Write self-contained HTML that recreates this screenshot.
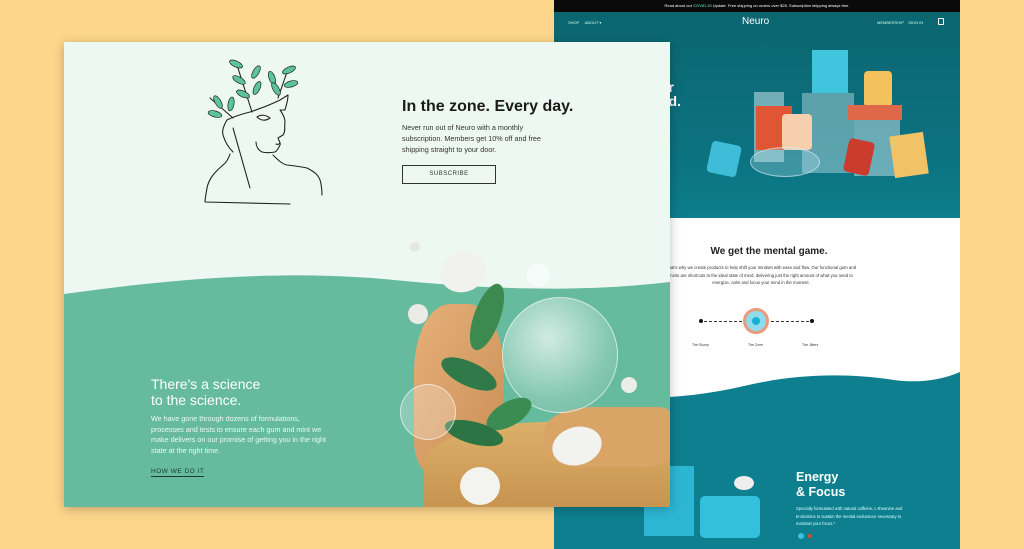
<!DOCTYPE html>
<html><head><meta charset="utf-8"><style>
*{margin:0;padding:0;box-sizing:border-box}
body{width:1024px;height:549px;overflow:hidden;background:#fdd68c;font-family:"Liberation Sans",sans-serif;position:relative}
.abs{position:absolute}
</style></head><body>
<!-- right page -->
<div class="abs" style="left:554px;top:0;width:406px;height:549px;background:#fff;overflow:hidden">
  <div class="abs" style="left:0;top:0;width:406px;height:12px;background:#0a0a0a;color:#fff;font-size:4px;text-align:center;line-height:12px">Read about our <span style="color:#6fd">COVID-19</span> Update. Free shipping on orders over $25. Subscription shipping always free.</div>
  <div class="abs" style="left:0;top:12px;width:406px;height:206px;background:linear-gradient(#0b6670,#0c7280 70%,#0d7e8c)"></div>
  <div class="abs" style="left:14px;top:20px;color:#cfe;font-size:4px">SHOP &nbsp;&nbsp;&nbsp; ABOUT ▾</div>
  <div class="abs" style="left:188px;top:16px;color:#fff;font-size:10px">Neuro</div>
  <div class="abs" style="left:323px;top:20px;color:#cfe;font-size:4px">MEMBERSHIP &nbsp;&nbsp; SIGN IN</div>
  <div class="abs" style="left:384px;top:18px;width:6px;height:7px;border:1px solid #fff;border-radius:1px"></div>
  <div class="abs" style="left:106px;top:80px;color:#fff;font-size:14px;font-weight:bold;line-height:14px">ur<br>nd.</div>
  <!-- products -->
  <div class="abs" style="left:200px;top:92px;width:30px;height:70px;background:#b8d8de;opacity:.6"></div>
  <div class="abs" style="left:258px;top:50px;width:36px;height:43px;background:#3fc5de"></div>
  <div class="abs" style="left:248px;top:93px;width:52px;height:80px;background:rgba(190,225,232,.45)"></div>
  <div class="abs" style="left:310px;top:71px;width:28px;height:36px;background:#f3c25c;border-radius:4px"></div>
  <div class="abs" style="left:294px;top:105px;width:54px;height:15px;background:#e0684a"></div>
  <div class="abs" style="left:300px;top:120px;width:46px;height:56px;background:rgba(200,230,238,.5)"></div>
  <div class="abs" style="left:202px;top:106px;width:36px;height:44px;background:#e05533"></div>
  <div class="abs" style="left:228px;top:114px;width:30px;height:36px;background:#f6d0ae;border-radius:4px"></div>
  <div class="abs" style="left:196px;top:147px;width:70px;height:30px;border:1px solid rgba(220,240,245,.6);border-radius:50%;background:rgba(180,225,235,.3)"></div>
  <div class="abs" style="left:155px;top:143px;width:30px;height:32px;background:#3fbcd8;border-radius:4px;transform:rotate(12deg)"></div>
  <div class="abs" style="left:292px;top:140px;width:26px;height:34px;background:#cc3c2c;border-radius:4px;transform:rotate(12deg)"></div>
  <div class="abs" style="left:338px;top:134px;width:34px;height:42px;background:#f2c366;transform:rotate(-8deg)"></div>
  <!-- mental game -->
  <div class="abs" style="left:100px;top:246px;width:230px;text-align:center;font-size:10px;font-weight:bold;color:#222">We get the mental game.</div>
  <div class="abs" style="left:110px;top:264px;width:194px;text-align:center;font-size:4.3px;line-height:7.5px;color:#333">That's why we create products to help shift your mindset with ease and flow. Our functional gum and mints are shortcuts to the ideal state of mind, delivering just the right amount of what you need to energize, calm and focus your mind in the moment.</div>
  <div class="abs" style="left:145px;top:319px;width:4px;height:4px;border-radius:50%;background:#111"></div>
  <div class="abs" style="left:150px;top:320.5px;width:38px;border-top:1px dashed #333"></div>
  <div class="abs" style="left:189px;top:308px;width:26px;height:26px;border-radius:50%;background:#8fdcec;border:3px solid #eb9a7c"></div>
  <div class="abs" style="left:198px;top:317px;width:8px;height:8px;border-radius:50%;background:#18b0d2"></div>
  <div class="abs" style="left:217px;top:320.5px;width:38px;border-top:1px dashed #333"></div>
  <div class="abs" style="left:256px;top:319px;width:4px;height:4px;border-radius:50%;background:#111"></div>
  <div class="abs" style="left:138px;top:343px;font-size:3.5px;color:#333">The Slump</div>
  <div class="abs" style="left:194px;top:343px;font-size:3.5px;color:#333">The Zone</div>
  <div class="abs" style="left:248px;top:343px;font-size:3.5px;color:#333">The Jitters</div>
  <svg class="abs" style="left:0;top:360px" width="406" height="189"><path d="M0 30 C70 42 130 40 190 26 C250 12 300 14 340 20 C370 24 392 18 406 12 L406 189 L0 189Z" fill="#0e7f8f"/></svg>
  <div class="abs" style="left:90px;top:466px;width:50px;height:70px;background:#2cb6d4"></div>
  <div class="abs" style="left:146px;top:496px;width:60px;height:42px;background:#33c0dc;border-radius:5px"></div>
  <div class="abs" style="left:180px;top:476px;width:20px;height:14px;background:#eee;border-radius:50%"></div>
  <div class="abs" style="left:242px;top:470px;color:#fff;font-size:12.5px;font-weight:bold;line-height:15px">Energy<br>&amp; Focus</div>
  <div class="abs" style="left:242px;top:505px;width:110px;color:#dff;font-size:4.2px;line-height:7.5px">Specially formulated with natural caffeine, L-theanine and B-vitamins to sustain the mental endurance necessary to maintain your focus.*</div>
  <div class="abs" style="left:244px;top:533px;width:6px;height:6px;border-radius:50%;background:#38c2e2"></div>
  <div class="abs" style="left:254px;top:534px;width:4px;height:4px;border-radius:50%;background:#e04a2a"></div>
</div>
<!-- left card -->
<div class="abs" style="left:64px;top:42px;width:606px;height:465px;background:#eef8f3;overflow:hidden;box-shadow:0 2px 10px rgba(0,0,0,.25)">
  <svg class="abs" style="left:0;top:0" width="606" height="465"><path d="M0 252 C120 235 230 228 330 238 C430 248 520 250 606 240 L606 465 L0 465Z" fill="#66bb9f"/></svg>
  <svg class="abs" style="left:126px;top:12px" width="140" height="160" fill="none" stroke="#222" stroke-width="1.1" stroke-linejoin="round" stroke-linecap="round">
    <path d="M37 66 C45 62 52 60 60 58 C72 54 82 50 90 46 L98 41 C98 47 96 52 95 56 L90 56 C93 60 95 64 95 68 C94 73 96 77 93 81 L88 84 C89 87 91 89 90 91 C88 95 87 97 85 98 C80 99 76 99 72 98 C68 96 66 92 66 88"/>
    <path d="M37 66 C33 72 32 78 33 81 C35 88 39 94 43 98"/>
    <path d="M43 74 L60 134"/>
    <path d="M83 101 C88 106 92 110 97 111 C106 112 112 113 117 114 C125 118 130 122 131 130 C132 135 132 139 132 141"/>
    <path d="M40 100 C38 106 36 109 33 111 C25 118 19 124 17 134 C16 140 15 145 15 148 L100 150"/>
    <path d="M67 63 C71 60 76 61 80 64 C76 67 71 67 67 63"/>
    <path d="M86 90 C88 91 89 90 90 89"/>
    <path d="M43 64 L20 44 M62 58 L47 11 M88 44 L97 18"/>
    <g fill="#5cc49a" stroke="#222" stroke-width=".7">
      <ellipse cx="25" cy="60" rx="7" ry="3" transform="rotate(15 25 60)"/>
      <ellipse cx="28" cy="48" rx="7" ry="3" transform="rotate(60 28 48)"/>
      <ellipse cx="41" cy="50" rx="7" ry="3" transform="rotate(-80 41 50)"/>
      <ellipse cx="46" cy="10" rx="7" ry="3" transform="rotate(25 46 10)"/>
      <ellipse cx="49" cy="26" rx="7" ry="3" transform="rotate(30 49 26)"/>
      <ellipse cx="53" cy="40" rx="7" ry="3" transform="rotate(25 53 40)"/>
      <ellipse cx="66" cy="18" rx="7" ry="3" transform="rotate(-60 66 18)"/>
      <ellipse cx="67" cy="34" rx="7" ry="3" transform="rotate(-65 67 34)"/>
      <ellipse cx="82" cy="24" rx="7" ry="3" transform="rotate(70 82 24)"/>
      <ellipse cx="86" cy="35" rx="7" ry="3" transform="rotate(60 86 35)"/>
      <ellipse cx="99" cy="16" rx="7" ry="3" transform="rotate(-25 99 16)"/>
      <ellipse cx="101" cy="30" rx="7" ry="3" transform="rotate(-15 101 30)"/>
    </g>
  </svg>
  <div class="abs" style="left:338px;top:56px;font-size:16px;font-weight:bold;color:#1b1b1b">In the zone. Every day.</div>
  <div class="abs" style="left:338px;top:80px;width:160px;font-size:7.2px;line-height:11px;color:#333">Never run out of Neuro with a monthly subscription. Members get 10% off and free shipping straight to your door.</div>
  <div class="abs" style="left:338px;top:123px;width:94px;height:19px;border:1.3px solid #333;font-size:6px;text-align:center;line-height:17px;color:#333;letter-spacing:.5px">SUBSCRIBE</div>
  <!-- product art -->
  <div class="abs" style="left:350px;top:262px;width:90px;height:170px;background:linear-gradient(120deg,#e6b07a,#c98e55);border-radius:40% 40% 20% 20%"></div>
  <div class="abs" style="left:360px;top:380px;width:246px;height:85px;background:linear-gradient(#dcb06a,#c8944f);border-radius:50% 30% 0 0"></div>
  <div class="abs" style="left:480px;top:365px;width:126px;height:60px;background:#d9a566;border-radius:40% 10% 20% 30%"></div>
  <div class="abs" style="left:376px;top:210px;width:46px;height:40px;background:#f1f1ee;border-radius:50%;transform:rotate(-20deg)"></div>
  <div class="abs" style="left:438px;top:255px;width:116px;height:116px;border-radius:50%;background:radial-gradient(circle at 40% 35%,rgba(255,255,255,.7),rgba(180,220,205,.4) 60%,rgba(120,180,160,.5));border:1px solid rgba(255,255,255,.6)"></div>
  <div class="abs" style="left:410px;top:240px;width:26px;height:70px;background:#3c8a50;border-radius:50%;transform:rotate(20deg)"></div>
  <div class="abs" style="left:375px;top:320px;width:60px;height:24px;background:#2f7a48;border-radius:50%;transform:rotate(25deg)"></div>
  <div class="abs" style="left:420px;top:360px;width:50px;height:24px;background:#3b8c52;border-radius:50%;transform:rotate(-30deg)"></div>
  <div class="abs" style="left:380px;top:380px;width:60px;height:22px;background:#2d7444;border-radius:50%;transform:rotate(15deg)"></div>
  <div class="abs" style="left:336px;top:342px;width:56px;height:56px;border-radius:50%;background:rgba(255,255,255,.25);border:1px solid rgba(255,255,255,.6)"></div>
  <div class="abs" style="left:488px;top:385px;width:50px;height:38px;background:#f2f2ef;border-radius:50%;transform:rotate(-15deg)"></div>
  <div class="abs" style="left:396px;top:425px;width:40px;height:38px;background:#f3f3f0;border-radius:50%"></div>
  <div class="abs" style="left:344px;top:262px;width:20px;height:20px;background:#eaeae6;border-radius:50%"></div>
  <div class="abs" style="left:463px;top:222px;width:22px;height:22px;border-radius:50%;background:rgba(255,255,255,.4);border:1px solid #fff"></div>
  <div class="abs" style="left:557px;top:335px;width:16px;height:16px;background:#ececE8;border-radius:50%"></div>
  <div class="abs" style="left:346px;top:200px;width:10px;height:10px;background:#e6e6e2;border-radius:50%"></div>
  <div class="abs" style="left:87px;top:334px;font-size:14px;line-height:16px;color:#fff">There's a science<br>to the science.</div>
  <div class="abs" style="left:87px;top:372px;width:180px;font-size:7.2px;line-height:10.5px;color:#eafaf3">We have gone through dozens of formulations, processes and tests to ensure each gum and mint we make delivers on our promise of getting you in the right state at the right time.</div>
  <div class="abs" style="left:87px;top:426px;font-size:6.5px;color:#1d3b33;letter-spacing:.5px;border-bottom:1px solid #1d3b33;padding-bottom:1px">HOW WE DO IT</div>
</div>
</body></html>
